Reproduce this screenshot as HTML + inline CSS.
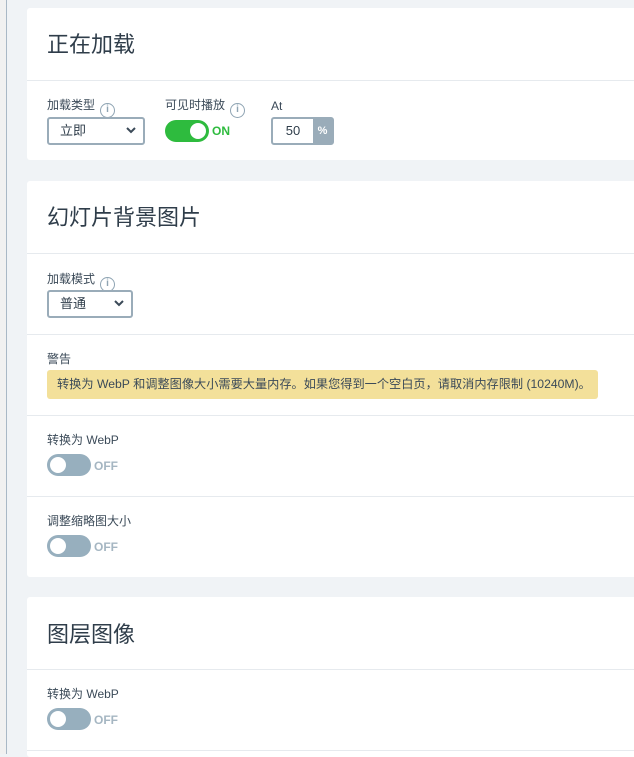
<!DOCTYPE html>
<html><head><meta charset="utf-8"><style>
*{box-sizing:border-box;margin:0;padding:0}
body{width:634px;height:754px;overflow:hidden;background:#f0f3f6;font-family:"Liberation Sans","Noto Sans CJK SC",sans-serif;color:#3b4a58;position:relative}
.lb{position:absolute;left:0;top:0;width:7px;height:754px;background:#f1f1f1;border-right:1.5px solid #a9b8c6}
.card{position:absolute;left:27px;width:607px;background:#fff;border-radius:3px 0 0 3px}
.t{position:absolute;left:20px;font-size:22px;color:#2f3d4a;line-height:26px}
.hr{position:absolute;left:0;right:0;height:1px;background:#e6eaee}
.lab{position:absolute;left:20px;font-size:12px;line-height:14px;color:#3b4a58}
.info{display:inline-block;width:15px;height:15px;border:1.5px solid #8fa4b3;border-radius:50%;color:#8fa4b3;font-size:10px;line-height:12px;text-align:center;font-weight:bold;vertical-align:-3px;margin-left:5px}
.sel{position:absolute;height:28px;border:2px solid #9aacb9;border-radius:3px;font-size:13px;line-height:24px;padding-left:11px;color:#2f3d4a}
.sel svg{position:absolute;right:7px;top:8px}
.tog{position:absolute;left:20px;width:44px;height:22px;border-radius:11px;background:#97afbe}
.tog::after{content:"";position:absolute;left:3px;top:3px;width:16px;height:16px;border-radius:50%;background:#fff}
.tog.on{background:#2ebb3e}.tog.on::after{left:25px}
.tt{position:absolute;font-size:12px;font-weight:bold;color:#a5b6c2}
</style></head><body>
<div class="lb"></div>
<div class="card" style="top:8px;height:152px">
<div class="t" style="top:24px">正在加载</div>
<div class="hr" style="top:72px"></div>
<div class="lab" style="top:90px">加载类型<span class="info">i</span></div>
<div class="sel" style="left:20px;top:109px;width:98px">立即<svg width="10" height="7"><path d="M1 1l4 4 4-4" stroke="#3b4a58" stroke-width="2" fill="none"/></svg></div>
<div class="lab" style="left:138px;top:90px">可见时播放<span class="info">i</span></div>
<div class="tog on" style="left:138px;top:112px"></div>
<div class="tt" style="left:185px;top:116px;color:#2ebb3e">ON</div>
<div class="lab" style="left:244px;top:91px">At</div>
<div style="position:absolute;left:244px;top:109px;width:63px;height:28px;border:2px solid #9aacb9;border-radius:3px;background:#9aacb9;overflow:hidden">
<div style="position:absolute;left:0;top:0;width:40px;height:24px;background:#fff;font-size:13px;line-height:24px;text-align:center;color:#2f3d4a">50</div>
<div style="position:absolute;left:40px;top:0;width:19px;height:24px;color:#fff;font-size:11px;font-weight:bold;line-height:24px;text-align:center">%</div></div>
</div>
<div class="card" style="top:181px;height:396px">
<div class="t" style="top:24px">幻灯片背景图片</div>
<div class="hr" style="top:72px"></div>
<div class="lab" style="top:91px">加载模式<span class="info">i</span></div>
<div class="sel" style="left:20px;top:109px;width:86px">普通<svg width="10" height="7"><path d="M1 1l4 4 4-4" stroke="#3b4a58" stroke-width="2" fill="none"/></svg></div>
<div class="hr" style="top:153px"></div>
<div class="lab" style="top:171px">警告</div>
<div style="position:absolute;left:20px;top:189px;width:551px;height:29px;background:#f3e09a;border-radius:3px;font-size:12.2px;line-height:29px;padding-left:10px;color:#3b4a58;white-space:nowrap">转换为 WebP 和调整图像大小需要大量内存。如果您得到一个空白页，请取消内存限制 (10240M)。</div>
<div class="hr" style="top:234px"></div>
<div class="lab" style="top:252px">转换为 WebP</div>
<div class="tog" style="top:273px"></div><div class="tt" style="left:67px;top:278px">OFF</div>
<div class="hr" style="top:315px"></div>
<div class="lab" style="top:333px">调整缩略图大小</div>
<div class="tog" style="top:354px"></div><div class="tt" style="left:67px;top:359px">OFF</div>
</div>
<div class="card" style="top:597px;height:160px">
<div class="t" style="top:25px">图层图像</div>
<div class="hr" style="top:72px"></div>
<div class="lab" style="top:90px">转换为 WebP</div>
<div class="tog" style="top:111px"></div><div class="tt" style="left:67px;top:116px">OFF</div>
<div class="hr" style="top:153px"></div>
</div>
</body></html>
